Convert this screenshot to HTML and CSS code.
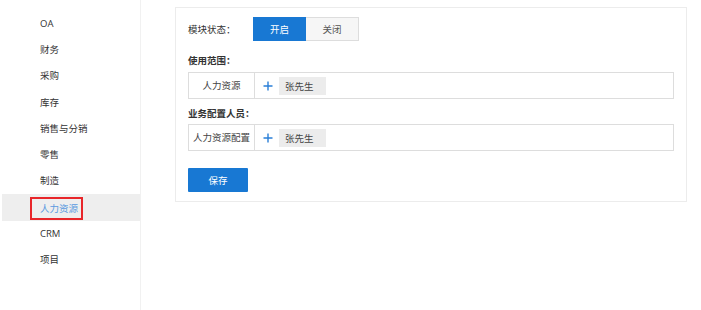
FILE: index.html
```html
<!DOCTYPE html>
<html lang="zh-CN">
<head>
    <meta charset="UTF-8">
    <title>模块设置</title>
    <link rel="stylesheet" href="styles.css">
</head>
<body>

<div class="page">
    <ul class="sidebar">
        <li class="nav-item">OA</li>
        <li class="nav-item">财务</li>
        <li class="nav-item">采购</li>
        <li class="nav-item">库存</li>
        <li class="nav-item">销售与分销</li>
        <li class="nav-item">零售</li>
        <li class="nav-item">制造</li>
        <li class="nav-item active"><span class="mark">人力资源</span></li>
        <li class="nav-item">CRM</li>
        <li class="nav-item">项目</li>
    </ul>

    <div class="main">
        <div class="card">
            <div class="status-row">
                <span class="status-label">模块状态：</span>
                <button class="toggle on">开启</button>
                <button class="toggle off">关闭</button>
            </div>

            <div class="field-label">使用范围：</div>
            <div class="pick-row">
                <div class="pick-name">人力资源</div>
                <div class="pick-body">
                    <svg class="plus" width="10" height="10" viewBox="0 0 10 10">
                        <path d="M5 0.5V9.5M0.5 5H9.5" stroke="#2a7fd8" stroke-width="1.4"/>
                    </svg>
                    <span class="tag">张先生</span>
                </div>
            </div>

            <div class="field-label second">业务配置人员：</div>
            <div class="pick-row">
                <div class="pick-name">人力资源配置</div>
                <div class="pick-body">
                    <svg class="plus" width="10" height="10" viewBox="0 0 10 10">
                        <path d="M5 0.5V9.5M0.5 5H9.5" stroke="#2a7fd8" stroke-width="1.4"/>
                    </svg>
                    <span class="tag">张先生</span>
                </div>
            </div>

            <button class="save-btn">保存</button>
        </div>
    </div>
</div>

</body>
</html>
```

FILE: styles.css
```css
body {
    margin: 0;
    font-family: "Noto Sans CJK SC", "Noto Sans", sans-serif;
    font-size: 9.5px;
    color: #333;
    background-color: #fff;
}

.page {
    display: flex;
    height: 310px;
}

.sidebar {
    list-style: none;
    margin: 0 0 0 2px;
    padding: 11px 0 0 0;
    width: 138px;
    border-right: 1px solid #f1f1f1;
}

.nav-item {
    height: 26.2px;
    line-height: 26px;
    padding-left: 38px;
    font-family: "Open Sans", "Noto Sans CJK SC", sans-serif;
}

.nav-item.active {
    background-color: #eeeeee;
    color: #5b9ae0;
}

.mark {
    display: inline-block;
    height: 19px;
    line-height: 19px;
    margin: 3px 0 0 -10px;
    padding: 0 3px 0 8px;
    border: 2px solid #e8262a;
    vertical-align: top;
}

.main {
    padding: 7px 0 0 34px;
}

.card {
    width: 486px;
    padding: 9px 12px 9px 12px;
    border: 1px solid #ececec;
}

.status-row {
    display: flex;
    align-items: center;
    height: 24px;
}

.status-label {
    width: 65px;
}

.toggle {
    width: 53px;
    height: 24px;
    padding: 0;
    font-family: inherit;
    font-size: 9.5px;
    border: 1px solid #ddd;
    cursor: pointer;
}

.toggle.on {
    background-color: #1878d3;
    border-color: #1878d3;
    color: #fff;
}

.toggle.off {
    background-color: #f6f6f6;
    color: #555;
    border-left: none;
}

.field-label {
    margin: 12px 0 5px;
    height: 14px;
    line-height: 14px;
    font-weight: bold;
}

.field-label.second {
    margin-top: 7px;
    margin-bottom: 4px;
}

.pick-row {
    display: flex;
    height: 25px;
    border: 1px solid #dddddd;
}

.pick-name {
    width: 65px;
    border-right: 1px solid #dddddd;
    text-align: center;
    line-height: 25px;
    color: #444;
}

.pick-body {
    display: flex;
    align-items: center;
    padding-left: 8px;
}

.plus {
    margin-right: 6px;
}

.tag {
    display: inline-block;
    width: 41px;
    height: 18px;
    line-height: 18px;
    padding-left: 6px;
    background-color: #ececec;
    color: #444;
}

.save-btn {
    display: block;
    margin-top: 17px;
    width: 60px;
    height: 24px;
    padding: 0;
    font-family: inherit;
    font-size: 9.5px;
    color: #fff;
    background-color: #1878d3;
    border: none;
    border-radius: 1px;
    cursor: pointer;
}
```
